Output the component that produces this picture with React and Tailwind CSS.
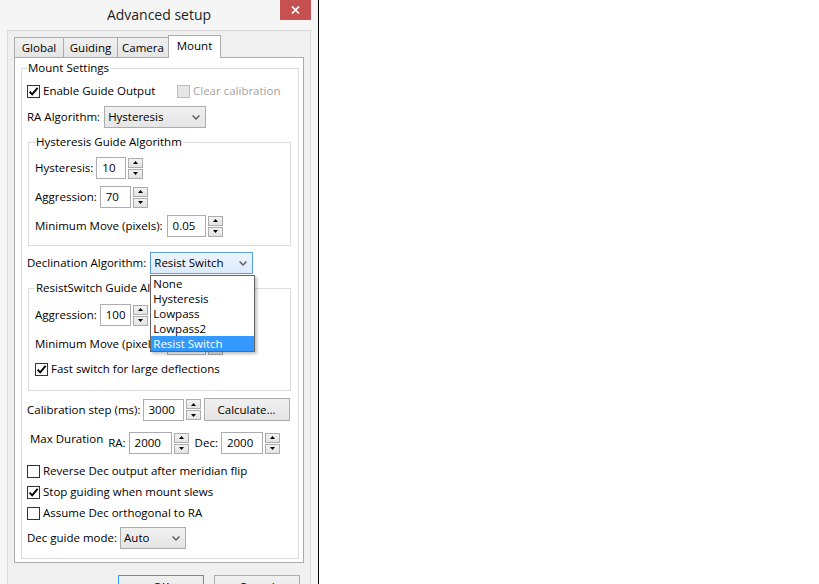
import React from 'react';

// small win8-ish controls used by the dialog

function Check({ checked, disabled, children, className = '' }) {
  return (
    <div className={`flex items-center h-[16px] ${className}`}>
      <span
        className={`w-[13px] h-[13px] shrink-0 border flex items-center justify-center ${
          disabled ? 'border-[#bcbcbc] bg-[#e6e6e6]' : 'border-[#333333] bg-white'
        }`}
      >
        {checked && (
          <svg width="11" height="11" viewBox="0 0 11 11">
            <path d="M1.6 5.6 L4.2 8.4 L9.6 1.8" fill="none" stroke="#000" strokeWidth="1.9" />
          </svg>
        )}
      </span>
      <span className={`ml-[3px] whitespace-nowrap ${disabled ? 'text-[#a3a3a3]' : ''}`}>{children}</span>
    </div>
  );
}

function Label({ children, className = '' }) {
  return <span className={`shrink-0 whitespace-nowrap ${className}`}>{children}</span>;
}

function TextBox({ value, width, className = '' }) {
  return (
    <div className={`h-[22px] ${width} shrink-0 border border-[#abadb3] bg-white flex items-center pl-[5px] ${className}`}>
      {value}
    </div>
  );
}

function Arrow({ down }) {
  return (
    <svg width="5" height="3" viewBox="0 0 5 3">
      <path d={down ? 'M0 0 L5 0 L2.5 3 Z' : 'M0 3 L5 3 L2.5 0 Z'} fill="#000" />
    </svg>
  );
}

function Spin({ className = 'ml-[2px]' }) {
  return (
    <div className={`flex flex-col gap-[1px] shrink-0 ${className}`}>
      <span className="w-[15px] h-[10px] border border-[#acacac] bg-linear-to-b from-[#f2f2f2] to-[#e3e3e3] flex items-center justify-center">
        <Arrow />
      </span>
      <span className="w-[15px] h-[10px] border border-[#acacac] bg-linear-to-b from-[#f2f2f2] to-[#e3e3e3] flex items-center justify-center">
        <Arrow down />
      </span>
    </div>
  );
}

function Combo({ value, width, focused, className = 'ml-[4px]', children }) {
  return (
    <div
      className={`relative h-[22px] ${width} shrink-0 ${className} border flex items-center pl-[3px] pr-[5px] ${
        focused
          ? 'border-[#569de5] bg-linear-to-b from-[#ecf4fc] to-[#dcecfc]'
          : 'border-[#acacac] bg-linear-to-b from-[#f0f0f0] to-[#e5e5e5]'
      }`}
    >
      <span className="flex-1 whitespace-nowrap">{value}</span>
      <svg width="8" height="5" viewBox="0 0 8 5">
        <path d="M0.6 0.6 L4 4 L7.4 0.6" fill="none" stroke="#5c5c5c" strokeWidth="1.4" />
      </svg>
      {children}
    </div>
  );
}

function Group({ title, className = '', children }) {
  return (
    <fieldset className={`min-w-0 border border-[#dcdcdc] ${className}`}>
      <legend className="px-[1px] leading-[14px] whitespace-nowrap">{title}</legend>
      {children}
    </fieldset>
  );
}

const decOptions = ['None', 'Hysteresis', 'Lowpass', 'Lowpass2', 'Resist Switch'];

export default function App() {
  return (
    <div className="w-[819px] h-[584px] bg-white overflow-hidden flex font-['Open_Sans',sans-serif] text-[11.5px] leading-[14px] text-black">
      {/* dialog window */}
      <div className="w-[319px] h-full shrink-0 bg-[#f5f5f5] border-r border-black flex flex-col">
        {/* title bar */}
        <div className="grid grid-cols-[1fr_auto_1fr] h-[30px] shrink-0">
          <div />
          <div className="flex items-center text-[14px] text-[#1e1e1e]">Advanced setup</div>
          <div className="flex justify-end items-start pr-[7px]">
            <div className="w-[31px] h-[20px] bg-[#c75050] flex items-center justify-center">
              <svg width="9" height="8" viewBox="0 0 9 8">
                <path d="M1 0.5 L8 7.5 M8 0.5 L1 7.5" stroke="#fff" strokeWidth="1.7" />
              </svg>
            </div>
          </div>
        </div>

        {/* client area */}
        <div className="mx-[7px] flex-1 border border-[#dadada] bg-[#f0f0f0] pt-[4px] px-[6px]">
          {/* tabs */}
          <div className="flex items-end h-[22px]">
            <div className="w-[50px] h-[20px] border border-b-0 border-[#acacac] bg-linear-to-b from-[#f0f0f0] to-[#e5e5e5] flex items-center justify-center">
              Global
            </div>
            <div className="w-[55px] h-[20px] -ml-px border border-b-0 border-[#acacac] bg-linear-to-b from-[#f0f0f0] to-[#e5e5e5] flex items-center justify-center">
              Guiding
            </div>
            <div className="w-[52px] h-[20px] -ml-px border border-b-0 border-[#acacac] bg-linear-to-b from-[#f0f0f0] to-[#e5e5e5] flex items-center justify-center">
              Camera
            </div>
            <div className="relative z-10 w-[53px] h-[23px] -ml-px -mb-px border border-b-0 border-[#acacac] bg-white flex items-center justify-center pb-[3px]">
              Mount
            </div>
          </div>

          {/* tab panel */}
          <div className="border border-[#acacac] bg-white pt-[3px] pl-[6px] pr-[4px] pb-[3px]">
            <Group title="Mount Settings" className="pl-[5px] pr-[7px] pb-[9px]">
              <div className="flex items-center mt-[8px]">
                <Check checked className="w-[150px]">Enable Guide Output</Check>
                <Check disabled>Clear calibration</Check>
              </div>

              <div className="flex items-center h-[22px] mt-[7px]">
                <Label>RA Algorithm:</Label>
                <Combo value="Hysteresis" width="w-[102px]" />
              </div>

              <Group title="Hysteresis Guide Algorithm" className="ml-[1px] mt-[7px] pl-[6px] pb-[8px]">
                <div className="flex items-center h-[22px] mt-[8px]">
                  <Label>Hysteresis:</Label>
                  <TextBox value="10" width="w-[30px]" className="ml-[3px]" />
                  <Spin />
                </div>
                <div className="flex items-center h-[22px] mt-[7px]">
                  <Label>Aggression:</Label>
                  <TextBox value="70" width="w-[31px]" className="ml-[3px]" />
                  <Spin />
                </div>
                <div className="flex items-center h-[22px] mt-[7px]">
                  <Label>Minimum Move (pixels):</Label>
                  <TextBox value="0.05" width="w-[39px]" className="ml-[4px]" />
                  <Spin />
                </div>
              </Group>

              <div className="relative z-20 flex items-center h-[22px] mt-[6px]">
                <Label>Declination Algorithm:</Label>
                <Combo value="Resist Switch" width="w-[103px]" focused>
                  {/* open drop-down list */}
                  <div className="absolute left-[-1px] top-[22px] w-[105px] border border-[#646464] bg-white shadow-[2px_2px_3px_rgba(0,0,0,0.25)]">
                    {decOptions.map((opt) => (
                      <div
                        key={opt}
                        className={`h-[15px] leading-[15px] pl-[2px] ${
                          opt === 'Resist Switch' ? 'bg-[#3399ff] text-white' : ''
                        }`}
                      >
                        {opt}
                      </div>
                    ))}
                  </div>
                </Combo>
              </div>

              <Group title="ResistSwitch Guide Algorithm" className="ml-[1px] mt-[7px] pl-[6px] pb-[13px]">
                <div className="flex items-center h-[22px] mt-[9px]">
                  <Label>Aggression:</Label>
                  <TextBox value="100" width="w-[31px]" className="ml-[3px]" />
                  <Spin />
                </div>
                <div className="flex items-center h-[22px] mt-[7px]">
                  <Label>Minimum Move (pixels):</Label>
                  <TextBox value="0.20" width="w-[39px]" className="ml-[4px]" />
                  <Spin />
                </div>
                <Check checked className="mt-[6px]">Fast switch for large deflections</Check>
              </Group>

              <div className="flex items-center h-[23px] mt-[7px]">
                <Label>Calibration step (ms):</Label>
                <TextBox value="3000" width="w-[41px]" className="ml-[2px]" />
                <Spin />
                <div className="ml-[3px] w-[86px] h-[23px] shrink-0 border border-[#acacac] bg-linear-to-b from-[#f0f0f0] to-[#e5e5e5] flex items-center justify-center">
                  Calculate...
                </div>
              </div>

              <div className="flex items-center h-[22px] mt-[11px]">
                <Label className="self-start ml-[3px]">Max Duration</Label>
                <Label className="ml-[5px]">RA:</Label>
                <TextBox value="2000" width="w-[43px]" className="ml-[3px]" />
                <Spin />
                <Label className="ml-[6px]">Dec:</Label>
                <TextBox value="2000" width="w-[42px]" className="ml-[3px]" />
                <Spin />
              </div>

              <Check className="mt-[9px]">Reverse Dec output after meridian flip</Check>
              <Check checked className="mt-[5px]">Stop guiding when mount slews</Check>
              <Check className="mt-[5px]">Assume Dec orthogonal to RA</Check>

              <div className="flex items-center h-[22px] mt-[6px]">
                <Label>Dec guide mode:</Label>
                <Combo value="Auto" width="w-[66px]" className="ml-[3px]" />
              </div>
            </Group>
          </div>

          {/* dialog buttons */}
          <div className="flex justify-end gap-[10px] mt-[12px] pr-[4px]">
            <div className="w-[86px] h-[23px] border border-[#3399ff] bg-linear-to-b from-[#f0f0f0] to-[#e5e5e5] flex items-center justify-center">
              OK
            </div>
            <div className="w-[86px] h-[23px] border border-[#acacac] bg-linear-to-b from-[#f0f0f0] to-[#e5e5e5] flex items-center justify-center">
              Cancel
            </div>
          </div>
        </div>
      </div>
    </div>
  );
}
